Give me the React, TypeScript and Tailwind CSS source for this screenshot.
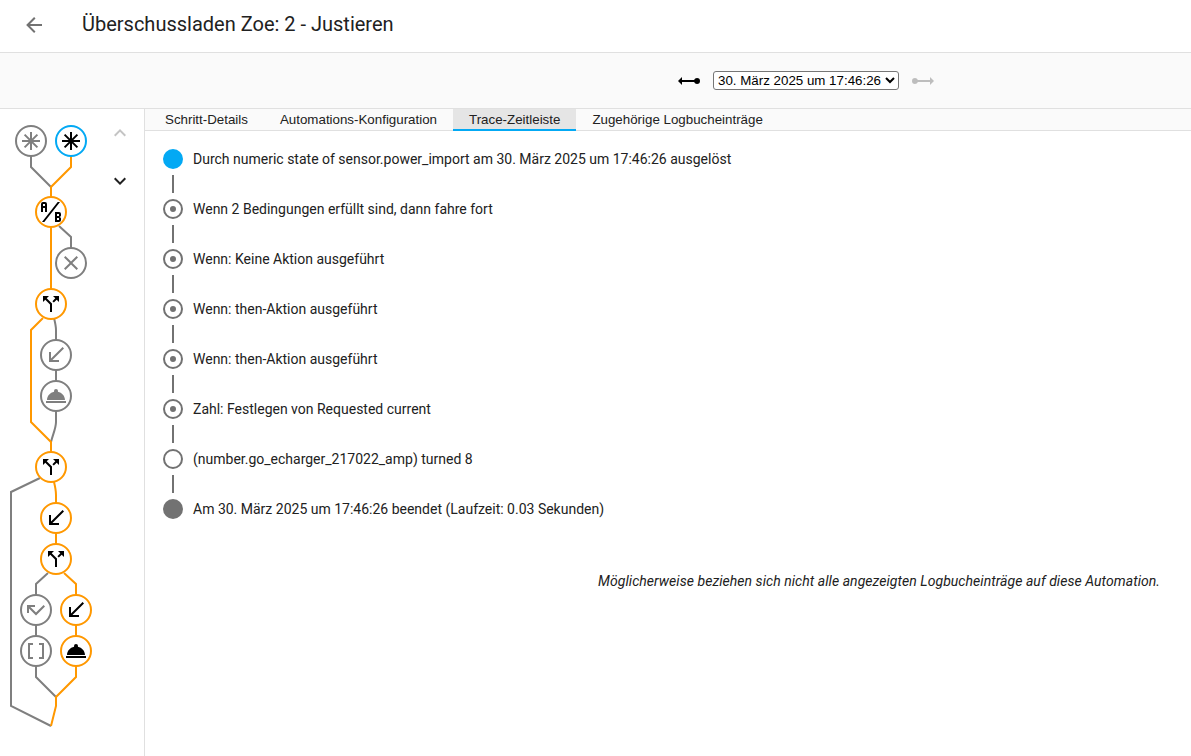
import React from "react";

const P = {
  star: "",
  ab: "M4 2A2 2 0 0 0 2 4V12H4V8H6V12H8V4A2 2 0 0 0 6 2H4M4 4H6V6H4M22 15.5V14A2 2 0 0 0 20 12H16V22H20A2 2 0 0 0 22 20V18.5A1.54 1.54 0 0 0 20.5 17A1.54 1.54 0 0 0 22 15.5M20 20H18V18H20V20M20 16H18V14H20M5.3 22H3L18.7 2H21Z",
  close: "M19,6.41L17.59,5L12,10.59L6.41,5L5,6.41L10.59,12L5,17.59L6.41,19L12,13.41L17.59,19L19,17.59L13.41,12L19,6.41Z",
  split: "M14,4L16.29,6.29L13.41,9.17L14.83,10.59L17.71,7.71L20,10V4M10,4H4V10L6.29,7.71L11,12.41V20H13V11.59L7.71,6.29",
  received: "M20,5.41L18.59,4L7,15.59V9H5V19H15V17H8.41",
  bell: "M12,5A2,2 0 0,1 14,7C14,7.24 13.96,7.47 13.88,7.69C17.95,8.5 21,11.91 21,16H3C3,11.91 6.05,8.5 10.12,7.69C10.04,7.47 10,7.24 10,7A2,2 0 0,1 12,5M22,19H2V17H22V19Z",
  missed: "M19.59,7L12,14.59L6.41,9H11V7H3V15H5V10.41L12,17.41L21,8.41",
  brackets: "M15,4V6H18V18H15V20H20V4M4,4V20H9V18H6V6H9V4H4Z",
};

const GRAY = "#7f7f7f";
const ORANGE = "#ff9800";
const BLUE = "#03a9f4";

type N = { x: number; y: number; d: string; c: string; fill: string };
const nodes: N[] = [
  { x: 31, y: 32, d: P.star, c: GRAY, fill: GRAY },
  { x: 71, y: 32, d: P.star, c: BLUE, fill: "#000" },
  { x: 51, y: 103, d: P.ab, c: ORANGE, fill: "#000" },
  { x: 71, y: 154, d: P.close, c: GRAY, fill: GRAY },
  { x: 51, y: 195, d: P.split, c: ORANGE, fill: "#000" },
  { x: 56, y: 246, d: P.received, c: GRAY, fill: GRAY },
  { x: 56, y: 287, d: P.bell, c: GRAY, fill: GRAY },
  { x: 51, y: 358, d: P.split, c: ORANGE, fill: "#000" },
  { x: 56, y: 409, d: P.received, c: ORANGE, fill: "#000" },
  { x: 56, y: 450, d: P.split, c: ORANGE, fill: "#000" },
  { x: 36, y: 501, d: P.missed, c: GRAY, fill: GRAY },
  { x: 76, y: 501, d: P.received, c: ORANGE, fill: "#000" },
  { x: 36, y: 542, d: P.brackets, c: GRAY, fill: GRAY },
  { x: 76, y: 542, d: P.bell, c: ORANGE, fill: "#000" },
];

const grayLines = [
  "M31 47V58L51 78",
  "M59 117L71 128V139",
  "M54 209C55 213 56 217 56 221V231",
  "M56 261V272",
  "M56 302V313C56 319 53 325 51 333",
  "M40 369L11 383V597L51 617",
  "M48 464L36 475V486",
  "M36 516V527",
  "M36 557V568L56 588",
];
const orangeLines = [
  "M71 47V58L51 78V88",
  "M51 118V180",
  "M43 209L31 221V313L51 333V343",
  "M54 373C55 377 56 381 56 386V394",
  "M56 424V435",
  "M64 464L76 475V486",
  "M76 516V527",
  "M76 557V568L56 588V597L51 617",
];

function Star({ color }: { color: string }) {
  return (
    <g stroke={color} fill="none">
      <path d="M12 3V21M3 12H21" strokeWidth="2" />
      <path d="M5.6 5.6L18.4 18.4M18.4 5.6L5.6 18.4" strokeWidth="2" />
    </g>
  );
}

function Graph() {
  return (
    <svg width="102" height="640" viewBox="0 0 102 640" className="shrink-0">
      {grayLines.map((d) => (
        <path key={d} d={d} fill="none" stroke={GRAY} strokeWidth="2" />
      ))}
      {orangeLines.map((d) => (
        <path key={d} d={d} fill="none" stroke={ORANGE} strokeWidth="2" />
      ))}
      {nodes.map((n, i) => (
        <g key={i} transform={`translate(${n.x} ${n.y})`}>
          <circle r="15" fill="#fff" stroke={n.c} strokeWidth="2" />
          <g transform="translate(-12 -12)">
            {n.d ? <path d={n.d} fill={n.fill} /> : <Star color={n.fill} />}
          </g>
        </g>
      ))}
    </svg>
  );
}

function Mdi({ d, className }: { d: string; className?: string }) {
  return (
    <svg width="24" height="24" viewBox="0 0 24 24" className={className} fill="currentColor">
      <path d={d} />
    </svg>
  );
}

const rows: { text: string; icon: "blue" | "record" | "outline" | "solid" }[] = [
  { text: "Durch numeric state of sensor.power_import am 30. März 2025 um 17:46:26 ausgelöst", icon: "blue" },
  { text: "Wenn 2 Bedingungen erfüllt sind, dann fahre fort", icon: "record" },
  { text: "Wenn: Keine Aktion ausgeführt", icon: "record" },
  { text: "Wenn: then-Aktion ausgeführt", icon: "record" },
  { text: "Wenn: then-Aktion ausgeführt", icon: "record" },
  { text: "Zahl: Festlegen von Requested current", icon: "record" },
  { text: "(number.go_echarger_217022_amp) turned 8", icon: "outline" },
  { text: "Am 30. März 2025 um 17:46:26 beendet (Laufzeit: 0.03 Sekunden)", icon: "solid" },
];

function RowIcon({ icon }: { icon: string }) {
  const ring = "M12,20A8,8 0 0,1 4,12A8,8 0 0,1 12,4A8,8 0 0,1 20,12A8,8 0 0,1 12,20M12,2A10,10 0 0,0 2,12A10,10 0 0,0 12,22A10,10 0 0,0 22,12A10,10 0 0,0 12,2Z";
  const disc = "M12,2A10,10 0 0,0 2,12A10,10 0 0,0 12,22A10,10 0 0,0 22,12A10,10 0 0,0 12,2Z";
  const dot = "M15,12A3,3 0 0,1 12,15A3,3 0 0,1 9,12A3,3 0 0,1 12,9A3,3 0 0,1 15,12Z";
  if (icon === "blue") return <Mdi d={disc} className="text-[#03a9f4]" />;
  if (icon === "solid") return <Mdi d={disc} className="text-[#727272]" />;
  if (icon === "record") return <Mdi d={ring + dot} className="text-[#727272]" />;
  return <Mdi d={ring} className="text-[#727272]" />;
}

const tabs = ["Schritt-Details", "Automations-Konfiguration", "Trace-Zeitleiste", "Zugehörige Logbucheinträge"];

export default function App() {
  return (
    <div className="flex h-screen w-full flex-col overflow-hidden bg-white text-[#212121] font-['Roboto',sans-serif]">
      <header className="flex h-[53px] shrink-0 items-center border-b border-[#e0e0e0] bg-white pb-[3px]">
        <div className="ml-[22px] flex h-6 w-6 text-[#727272]">
          <Mdi d="M20,11V13H8L13.5,18.5L12.08,19.92L4.16,12L12.08,4.08L13.5,5.5L8,11H20Z" />
        </div>
        <h1 className="mb-[2px] ml-[36px] text-[20px] leading-none font-normal">Überschussladen Zoe: 2 - Justieren</h1>
      </header>

      <div className="flex h-[56px] shrink-0 items-center border-b border-[#e0e0e0] bg-[#fafafa] pl-[677px]">
        <Mdi d="M1,12L5,16V13H17.17C17.58,14.17 18.69,15 20,15A3,3 0 0,0 23,12A3,3 0 0,0 20,9C18.69,9 17.58,9.83 17.17,11H5V8L1,12Z" className="text-black" />
        <select
          className="mx-3 h-[19px] w-[186px] appearance-auto rounded-[3px] border border-[#767676] bg-white text-[13.33px] text-black font-['Liberation_Sans',sans-serif]"
          defaultValue="a"
        >
          <option value="a">30. März 2025 um 17:46:26</option>
        </select>
        <Mdi d="M23,12L19,16V13H6.83C6.42,14.17 5.31,15 4,15A3,3 0 0,1 1,12A3,3 0 0,1 4,9C5.31,9 6.42,9.83 6.83,11H19V8L23,12Z" className="text-[#bdbdbd]" />
      </div>

      <div className="flex min-h-0 flex-1">
        <aside className="flex w-[145px] shrink-0 border-r border-[#e0e0e0] bg-white">
          <Graph />
          <div className="flex w-[36px] flex-col items-center pt-3">
            <Mdi d="M7.41,15.41L12,10.83L16.59,15.41L18,14L12,8L6,14L7.41,15.41Z" className="text-[#c4c4c4]" />
            <Mdi d="M7.41,8.58L12,13.17L16.59,8.58L18,10L12,16L6,10L7.41,8.58Z" className="mt-6 text-[#212121]" />
          </div>
        </aside>

        <main className="min-w-0 flex-1">
          <nav className="flex h-[22px] border-b border-[#e0e0e0] bg-[#fafafa] pl-1 text-[13.33px] leading-[21px] font-['Liberation_Sans',sans-serif]">
            {tabs.map((t, i) =>
              i === 2 ? (
                <button key={t} className="-mb-px h-[22px] border-b-2 border-[#03a9f4] bg-[#e5e5e5] px-4 pt-[2px] leading-[18px]">
                  {t}
                </button>
              ) : (
                <button key={t} className="h-[21px] px-4">
                  {t}
                </button>
              ),
            )}
          </nav>

          <div className="pt-4 pl-4 pr-[31px] text-[14px]">
            {rows.map((r, i) => (
              <div key={i}>
                <div className="flex h-6 items-center gap-2">
                  <RowIcon icon={r.icon} />
                  <span>{r.text}</span>
                </div>
                {i < rows.length - 1 && <div className="mt-1 mb-1 ml-[11px] h-[18px] w-[2px] bg-[#727272]" />}
              </div>
            ))}
            <p className="mt-[50px] text-right italic leading-5 tracking-[0.05px]">
              Möglicherweise beziehen sich nicht alle angezeigten Logbucheinträge auf diese Automation.
            </p>
          </div>
        </main>
      </div>
    </div>
  );
}
